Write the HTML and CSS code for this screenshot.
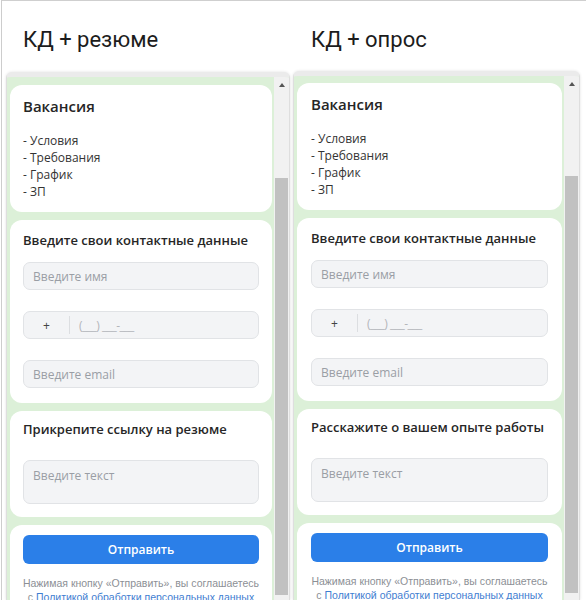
FILE: index.html
```html
<!DOCTYPE html>
<html lang="ru">
<head>
<meta charset="utf-8">
<title>КД</title>
<link rel="stylesheet" href="styles.css">
</head>
<body>
<div class="page">
  <section class="panel panel-left">
    <h1 class="title">КД + резюме</h1>
    <div class="frame">
      <div class="feed">
        <div class="card card-vac">
          <h2 class="vac-title">Вакансия</h2>
          <ul class="vac-list">
            <li>- Условия</li>
            <li>- Требования</li>
            <li>- График</li>
            <li>- ЗП</li>
          </ul>
        </div>
        <div class="card card-contacts">
          <h3 class="card-title">Введите свои контактные данные</h3>
          <div class="field"><span class="ph">Введите имя</span></div>
          <div class="field field-phone"><span class="prefix">+</span><span class="divider"></span><span class="mask">(___) ___-___</span></div>
          <div class="field"><span class="ph">Введите email</span></div>
        </div>
        <div class="card card-text">
          <h3 class="card-title">Прикрепите ссылку на резюме</h3>
          <div class="area"><span class="ph">Введите текст</span></div>
        </div>
        <div class="card card-submit">
          <button class="btn">Отправить</button>
          <p class="legal"><span class="legal-line">Нажимая кнопку «Отправить», вы соглашаетесь</span><span class="legal-line">с <a class="link">Политикой обработки персональных данных</a></span></p>
        </div>
      </div>
      <div class="scrollbar">
        <div class="track-top"><span class="arrow"></span></div>
        <div class="thumb"></div>
      </div>
    </div>
  </section>
  <section class="panel panel-right">
    <h1 class="title">КД + опрос</h1>
    <div class="frame">
      <div class="feed">
        <div class="card card-vac">
          <h2 class="vac-title">Вакансия</h2>
          <ul class="vac-list">
            <li>- Условия</li>
            <li>- Требования</li>
            <li>- График</li>
            <li>- ЗП</li>
          </ul>
        </div>
        <div class="card card-contacts">
          <h3 class="card-title">Введите свои контактные данные</h3>
          <div class="field"><span class="ph">Введите имя</span></div>
          <div class="field field-phone"><span class="prefix">+</span><span class="divider"></span><span class="mask">(___) ___-___</span></div>
          <div class="field"><span class="ph">Введите email</span></div>
        </div>
        <div class="card card-text">
          <h3 class="card-title">Расскажите о вашем опыте работы</h3>
          <div class="area"><span class="ph">Введите текст</span></div>
        </div>
        <div class="card card-submit">
          <button class="btn">Отправить</button>
          <p class="legal"><span class="legal-line">Нажимая кнопку «Отправить», вы соглашаетесь</span><span class="legal-line">с <a class="link">Политикой обработки персональных данных</a></span></p>
        </div>
      </div>
      <div class="scrollbar">
        <div class="track-top"><span class="arrow"></span></div>
        <div class="thumb"></div>
      </div>
    </div>
  </section>
</div>
</body>
</html>
```
FILE: styles.css
```css
* { box-sizing: border-box; }
html, body { margin: 0; padding: 0; background: #ffffff; }
body { font-family: "Open Sans", "Noto Sans", sans-serif; color: #222; }

.page {
  display: flex;
  height: 600px;
  overflow: hidden;
  margin-left: 1px;
  border-top: 1px solid #cfcfcf;
  border-left: 1px solid #cdcdcd;
}

.panel { display: flex; flex-direction: column; }
.panel-left { width: 291px; }
.panel-right { flex: 1; }

.title {
  margin: 0;
  padding-top: 26px;
  font-family: Roboto, "Liberation Sans", sans-serif;
  font-weight: 400;
  font-size: 22px;
  line-height: 26px;
  color: #1c1c1c;
}
.panel-left .title { padding-left: 21px; margin-bottom: 19px; }
.panel-right .title { padding-left: 18px; margin-bottom: 18px; }

.frame {
  display: flex;
  flex: 1;
  min-height: 0;
  background: #dcf0d8;
  border-top: 5px solid #ebebeb;
  border-left: 1px solid #dedede;
  border-right: 1px solid #dedede;
  border-radius: 6px 6px 0 0;
  box-shadow: 0 0 3px rgba(0, 0, 0, 0.12);
  overflow: hidden;
}
.panel-left .frame { margin-left: 4px; width: 284px; }
.panel-right .frame { width: 287px; }

.feed {
  flex: 1;
  display: flex;
  flex-direction: column;
  gap: 8px;
  padding: 8px 2px 0 3px;
}
.panel-right .feed { padding-top: 7px; }

.card {
  background: #ffffff;
  border-radius: 12px;
  padding: 10px 13px 12px;
  flex-shrink: 0;
}
.panel-right .card { padding-left: 14px; padding-right: 14px; }

.vac-title {
  margin: 0;
  font-size: 15px;
  line-height: 22px;
  font-weight: 600;
  color: #262626;
}
.vac-list {
  list-style: none;
  margin: 15px 0 0;
  padding: 0;
  font-size: 12px;
  line-height: 17px;
  color: #333;
}

.card-title {
  margin: 0;
  font-size: 13px;
  line-height: 20px;
  font-weight: 600;
  color: #262626;
}
.card-contacts { padding-bottom: 15px; }
.card-text { padding-top: 8px; padding-bottom: 13px; }

.field {
  display: flex;
  align-items: center;
  height: 28px;
  margin-top: 21px;
  padding-left: 9px;
  background: #f3f4f6;
  border: 1px solid #e1e3e6;
  border-radius: 7px;
}
.card-title + .field { margin-top: 12px; }

.ph {
  font-size: 12px;
  color: #9a9ea5;
}

.field-phone { padding-left: 0; }
.prefix {
  width: 45px;
  text-align: center;
  font-size: 12px;
  color: #444;
}
.divider {
  width: 1px;
  height: 18px;
  background: #dcdee1;
}
.mask {
  padding-left: 9px;
  font-size: 12px;
  color: #b3b6bb;
  letter-spacing: -0.5px;
}

.area {
  height: 44px;
  margin-top: 21px;
  padding: 5px 9px;
  background: #f3f4f6;
  border: 1px solid #e1e3e6;
  border-radius: 7px;
  line-height: 16px;
}

.card-submit { padding-bottom: 20px; }
.btn {
  display: block;
  width: 100%;
  height: 29px;
  border: 0;
  border-radius: 6px;
  background: #2b7fe8;
  color: #ffffff;
  font-family: "Open Sans", "Noto Sans", sans-serif;
  font-size: 12px;
  font-weight: 600;
  cursor: pointer;
}
.legal {
  margin: 12px -4px 0;
  text-align: center;
  font-family: "Liberation Sans", Arial, sans-serif;
  font-size: 10.5px;
  line-height: 14px;
  color: #8c8f95;
}
.legal-line { display: block; white-space: nowrap; }
.link { color: #3f7ed1; text-decoration: none; }

.scrollbar {
  width: 15px;
  flex-shrink: 0;
  display: flex;
  flex-direction: column;
  background: #f1f1f1;
}
.track-top {
  height: 101px;
  display: flex;
  justify-content: center;
  padding-top: 6px;
}
.panel-right .track-top { height: 100px; }
.arrow {
  width: 0;
  height: 0;
  border-left: 3.5px solid transparent;
  border-right: 3.5px solid transparent;
  border-bottom: 4px solid #555;
}
.thumb {
  height: 417px;
  margin: 0 1px;
  background: #c1c1c1;
}
```
